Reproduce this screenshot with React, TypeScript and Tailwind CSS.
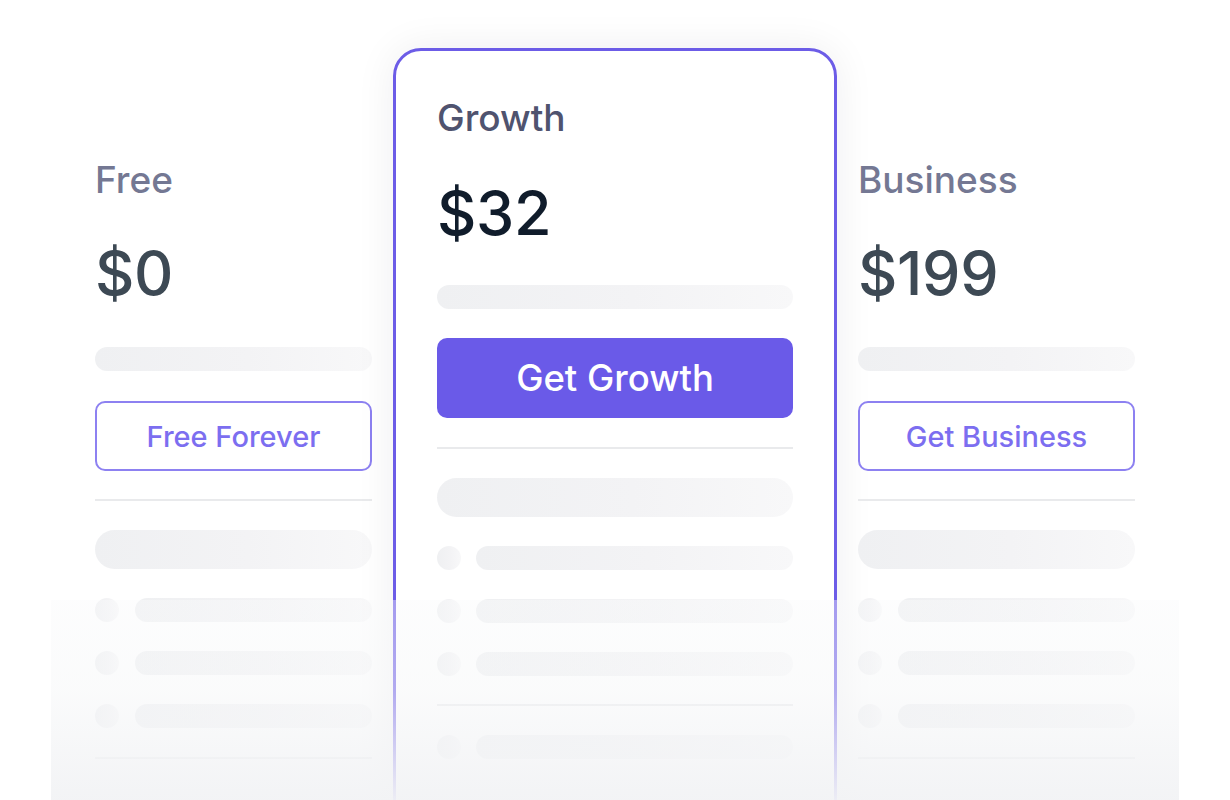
import type { ReactNode } from 'react';

// Placeholder bar used for the blurred feature lines
function Skel({ className }: { className: string }) {
  return <div className={`rounded-full bg-[linear-gradient(90deg,#eff0f2_0%,#f3f3f5_55%,#f8f8f9_100%)] ${className}`} />;
}

function FeatureRow({ pill }: { pill: string }) {
  return (
    <div className="flex items-center">
      <Skel className="h-[24px] w-[24px] shrink-0" />
      <Skel className={`h-[24px] flex-1 ${pill}`} />
    </div>
  );
}

function Divider() {
  return <div className="h-[2px] w-full bg-[#e9eaec]" />;
}

function SidePlan({ name, price, cta }: { name: string; price: string; cta: ReactNode }) {
  return (
    <div className="mt-[113px] flex w-[277px] shrink-0 flex-col">
      <div className="text-[37px] font-[450] leading-none text-[#747893]">{name}</div>
      <div className="mt-[45px] text-[61px] font-[450] leading-none tracking-[-0.3px] text-[#3d4954]">{price}</div>
      <Skel className="mt-[43px] h-[24px] w-full" />
      <button className="mt-[30px] flex h-[70px] w-full items-center justify-center rounded-[10px] border-2 border-[#8d81f1] bg-white text-[29px] font-[450] leading-none text-[#7c6ef0]">
        {cta}
      </button>
      <div className="mt-[28px]">
        <Divider />
      </div>
      <Skel className="mt-[29px] h-[39px] w-full" />
      <div className="mt-[29px] flex flex-col gap-[29px]">
        <FeatureRow pill="ml-[16px]" />
        <FeatureRow pill="ml-[16px]" />
        <FeatureRow pill="ml-[16px]" />
      </div>
      <div className="mt-[29px]">
        <Divider />
      </div>
    </div>
  );
}

function FeaturedPlan() {
  return (
    <div className="flex h-[820px] w-[444px] shrink-0 flex-col rounded-[28px] border-[3px] border-[#6c5ce7] bg-white px-[41px] pt-[48px] shadow-[0_0_40px_rgba(15,23,42,0.07)]">
      <div className="text-[37px] font-[450] leading-none text-[#4f536f]">Growth</div>
      <div className="mt-[47px] text-[61px] font-[450] leading-none tracking-[-0.3px] text-[#101c2b]">$32</div>
      <Skel className="mt-[41px] h-[24px] w-full" />
      <button className="mt-[29px] flex h-[80px] w-full items-center justify-center rounded-[10px] bg-[#6a5ae8] text-[36.5px] font-[450] leading-none text-white">
        Get Growth
      </button>
      <div className="mt-[29px]">
        <Divider />
      </div>
      <Skel className="mt-[29px] h-[39px] w-full" />
      <div className="mt-[29px] flex flex-col gap-[29px]">
        <FeatureRow pill="ml-[15px]" />
        <FeatureRow pill="ml-[15px]" />
        <FeatureRow pill="ml-[15px]" />
      </div>
      <div className="mt-[28px]">
        <Divider />
      </div>
      <div className="mt-[29px]">
        <FeatureRow pill="ml-[15px]" />
      </div>
    </div>
  );
}

export default function App() {
  return (
    <div className="relative h-[800px] w-full overflow-hidden bg-white font-['Inter',sans-serif]">
      <div className="flex justify-center gap-[21px] pt-[48px]">
        <SidePlan name="Free" price="$0" cta="Free Forever" />
        <FeaturedPlan />
        <SidePlan name="Business" price="$199" cta="Get Business" />
      </div>

      {/* bottom fade over the lower rows */}
      <div className="pointer-events-none absolute bottom-0 left-[51px] right-[51px] top-[600px] bg-[linear-gradient(180deg,rgba(249,250,251,0.4)_0%,rgba(246,247,248,0.5)_45%,rgba(242,243,245,0.96)_100%)]" />
    </div>
  );
}
